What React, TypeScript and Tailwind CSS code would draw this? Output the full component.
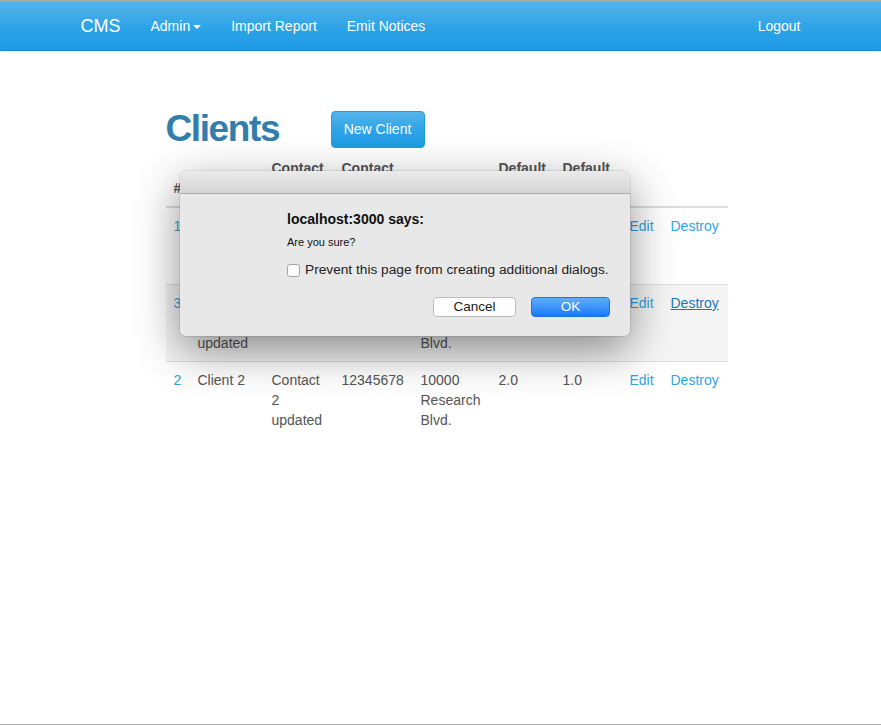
import React from 'react';

const font = { fontFamily: '"Liberation Sans", Arial, sans-serif' };

type Row = {
  id: string;
  name: string[];
  contact: string[];
  phone: string;
  address: string[];
  rate: string;
  fee: string;
  hover?: boolean;
};

const rows: Row[] = [
  {
    id: '1',
    name: ['Client 1'],
    contact: ['Contact', '1'],
    phone: '12345678',
    address: ['10000', 'Research', 'Blvd.'],
    rate: '2.0',
    fee: '1.0',
  },
  {
    id: '3',
    name: ['Client 3', 'name', 'updated'],
    contact: ['Contact', '3'],
    phone: '12345678',
    address: ['10000', 'Research', 'Blvd.'],
    rate: '2.0',
    fee: '1.0',
    hover: true,
  },
  {
    id: '2',
    name: ['Client 2'],
    contact: ['Contact', '2', 'updated'],
    phone: '12345678',
    address: ['10000', 'Research', 'Blvd.'],
    rate: '2.0',
    fee: '1.0',
  },
];

function Lines({ lines }: { lines: string[] }) {
  return (
    <>
      {lines.map((l, i) => (
        <div key={i} className="whitespace-nowrap">
          {l}
        </div>
      ))}
    </>
  );
}

function Navbar() {
  return (
    <nav className="h-[50px] border-b border-[#178acc] bg-gradient-to-b from-[#54b4eb] via-[#2fa4e7] to-[#1d9ce5] shadow-[0_1px_4px_rgba(0,0,0,0.08)]">
      <div className="mx-auto flex h-full w-[750px] items-center px-[15px] text-white">
        <span className="text-[18px] leading-[20px]">CMS</span>
        <span className="ml-[30px] flex items-center text-[14px] leading-[20px]">
          Admin
          <span className="ml-[3px] mt-[2px] inline-block h-0 w-0 border-x-[4px] border-t-[4px] border-x-transparent border-t-white" />
        </span>
        <span className="ml-[30px] text-[14px] leading-[20px]">Import Report</span>
        <span className="ml-[30px] text-[14px] leading-[20px]">Emit Notices</span>
        <span className="ml-auto text-[14px] leading-[20px]">Logout</span>
      </div>
    </nav>
  );
}

function ClientsTable() {
  return (
    <table className="mt-[1px] w-[562px] table-fixed border-collapse text-[14px] leading-[20px] text-[#555555]">
      <colgroup>
        <col className="w-[24px]" />
        <col className="w-[74px]" />
        <col className="w-[70px]" />
        <col className="w-[79px]" />
        <col className="w-[78px]" />
        <col className="w-[64px]" />
        <col className="w-[67px]" />
        <col className="w-[41px]" />
        <col className="w-[65px]" />
      </colgroup>
      <thead>
        <tr className="border-b-2 border-[#dddddd] text-left align-bottom font-bold">
          <th className="p-[8px]">#</th>
          <th className="p-[8px]">Name</th>
          <th className="p-[8px]">
            <Lines lines={['Contact', 'Name']} />
          </th>
          <th className="p-[8px]">
            <Lines lines={['Contact', 'Phone']} />
          </th>
          <th className="p-[8px]">Address</th>
          <th className="p-[8px]">
            <Lines lines={['Default', 'Rate']} />
          </th>
          <th className="p-[8px]">
            <Lines lines={['Default', 'Fee']} />
          </th>
          <th className="p-[8px]" />
          <th className="p-[8px]" />
        </tr>
      </thead>
      <tbody>
        {rows.map((r) => (
          <tr
            key={r.id}
            className={`border-t border-[#dddddd] align-top ${r.hover ? 'bg-[#f5f5f5]' : ''}`}
          >
            <td className="p-[8px] text-[#2fa4e7]">{r.id}</td>
            <td className="p-[8px]">
              <Lines lines={r.name} />
            </td>
            <td className="p-[8px]">
              <Lines lines={r.contact} />
            </td>
            <td className="p-[8px]">{r.phone}</td>
            <td className="p-[8px]">
              <Lines lines={r.address} />
            </td>
            <td className="p-[8px]">{r.rate}</td>
            <td className="p-[8px]">{r.fee}</td>
            <td className="p-[8px] text-[#2fa4e7]">Edit</td>
            <td className="p-[8px]">
              <span className={r.hover ? 'text-[#157ab5] underline' : 'text-[#2fa4e7]'}>
                Destroy
              </span>
            </td>
          </tr>
        ))}
      </tbody>
    </table>
  );
}

function ConfirmDialog() {
  return (
    <div className="absolute left-[180px] top-[170px] flex h-[165px] w-[450px] flex-col overflow-hidden rounded-[6px] bg-[#e8e8e8] shadow-[0_14px_45px_rgba(0,0,0,0.45),0_0_0_1px_rgba(0,0,0,0.08)]">
      <div className="h-[23px] shrink-0 border-b border-[#acacac] bg-gradient-to-b from-[#ebebeb] to-[#d4d4d4]" />
      <div className="flex flex-col pl-[107px] pr-[20px] pt-[17px] text-[#111111]">
        <div className="text-[14px] font-bold leading-[16px]">localhost:3000 says:</div>
        <div className="mt-[8px] text-[11px] leading-[14px]">Are you sure?</div>
        <div className="mt-[13px] flex h-[16px] items-center">
          <span className="h-[13px] w-[13px] rounded-[3px] border border-[#a6a6a6] bg-white" />
          <span className="ml-[5px] text-[13.7px] leading-[16px] text-[#222222]">
            Prevent this page from creating additional dialogs.
          </span>
        </div>
        <div className="mt-[19px] flex justify-end gap-[15px]">
          <button className="flex h-[20px] w-[83px] items-center justify-center rounded-[4px] border border-[#bdbdbd] bg-white text-[13.5px] leading-[16px] text-[#222222]">
            Cancel
          </button>
          <button className="flex h-[20px] w-[79px] items-center justify-center rounded-[4px] border border-[#1873e8] bg-gradient-to-b from-[#5fadfc] to-[#1479f7] text-[13.5px] leading-[16px] text-white">
            OK
          </button>
        </div>
      </div>
    </div>
  );
}

export default function App() {
  return (
    <div
      style={font}
      className="relative h-[725px] w-[881px] overflow-hidden border-y border-[#a9a9a9] bg-white"
    >
      <Navbar />
      <main className="mx-auto w-[750px] px-[15px]">
        <div className="ml-[85px] w-[562px]">
          <div className="mt-[58px] flex h-[40px] items-center">
            <h1 className="w-[165px] text-[37px] font-bold leading-[40px] tracking-[-1.4px] text-[#317eac]">
              Clients
            </h1>
            <button className="flex h-[37px] w-[94px] items-center justify-center rounded-[4px] border border-[#1f9de4] bg-gradient-to-b from-[#54b4eb] via-[#2fa4e7] to-[#1d9ce5] text-[14px] text-white">
              New Client
            </button>
          </div>
          <ClientsTable />
        </div>
      </main>
      <ConfirmDialog />
    </div>
  );
}
